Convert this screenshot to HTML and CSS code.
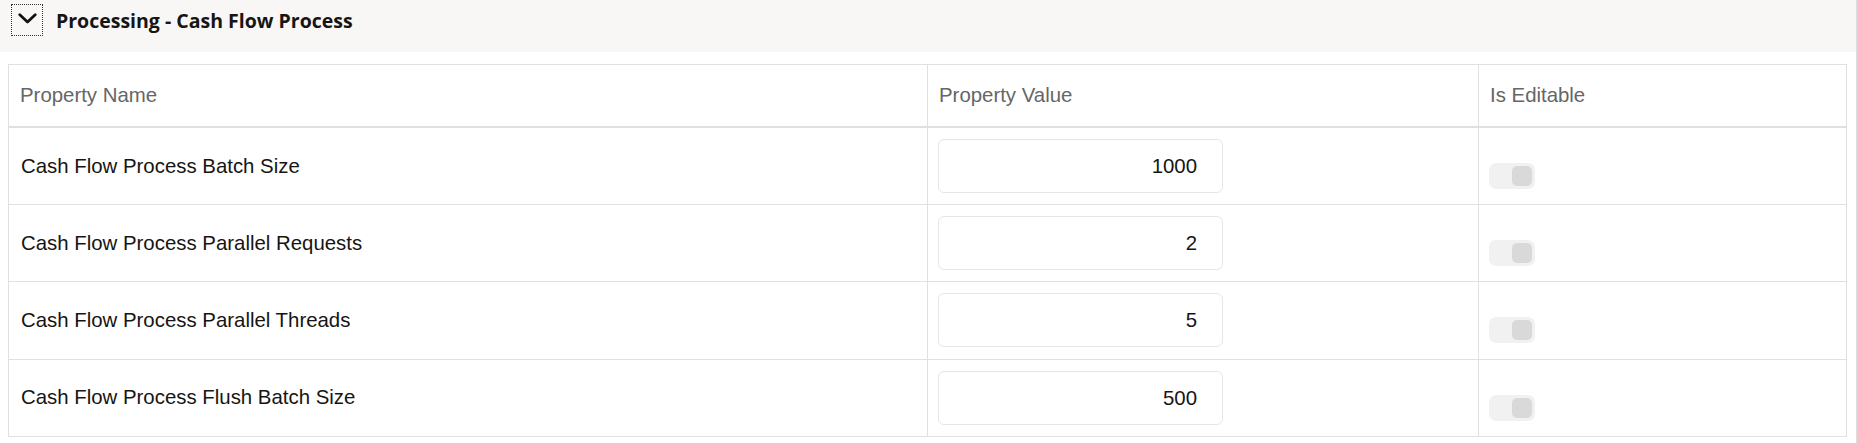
FILE: index.html
```html
<!DOCTYPE html>
<html lang="en">
<head>
<meta charset="utf-8">
<title>Processing - Cash Flow Process</title>
<link rel="stylesheet" href="styles.css">
</head>
<body>
<div class="panel">
  <div class="panel-header">
    <button class="collapse-btn" aria-label="Collapse">
      <svg width="19" height="11" viewBox="0 0 19 11"><path d="M1.8 1.8 L9.5 9 L17.2 1.8" fill="none" stroke="#111" stroke-width="2.8" stroke-linecap="round" stroke-linejoin="round"/></svg>
    </button>
    <h2 class="panel-title">Processing - Cash Flow Process</h2>
  </div>
  <div class="table-wrap">
    <table class="props">
      <colgroup>
        <col class="c-name">
        <col class="c-value">
        <col class="c-edit">
      </colgroup>
      <thead>
        <tr><th>Property Name</th><th>Property Value</th><th>Is Editable</th></tr>
      </thead>
      <tbody>
        <tr>
          <td class="name">Cash Flow Process Batch Size</td>
          <td class="value"><div class="input">1000</div></td>
          <td class="edit"><span class="toggle"><span class="knob"></span></span></td>
        </tr>
        <tr>
          <td class="name">Cash Flow Process Parallel Requests</td>
          <td class="value"><div class="input">2</div></td>
          <td class="edit"><span class="toggle"><span class="knob"></span></span></td>
        </tr>
        <tr>
          <td class="name">Cash Flow Process Parallel Threads</td>
          <td class="value"><div class="input">5</div></td>
          <td class="edit"><span class="toggle"><span class="knob"></span></span></td>
        </tr>
        <tr>
          <td class="name">Cash Flow Process Flush Batch Size</td>
          <td class="value"><div class="input">500</div></td>
          <td class="edit"><span class="toggle"><span class="knob"></span></span></td>
        </tr>
      </tbody>
    </table>
  </div>
</div>
</body>
</html>
```
FILE: styles.css
```css
html, body {
  margin: 0;
  padding: 0;
  background: #ffffff;
}
.panel {
  width: 1856px;
  height: 443px;
  border-right: 1px solid #dedede;
  overflow: hidden;
}
.panel-header {
  height: 52px;
  background: #f8f7f5;
  display: flex;
  align-items: flex-start;
}
.collapse-btn {
  margin: 4px 0 0 11px;
  width: 32px;
  height: 32px;
  padding: 0;
  border: 1px dotted #333;
  background: transparent;
  display: flex;
  align-items: center;
  justify-content: center;
}
.collapse-btn svg {
  margin-top: -3px;
}
.panel-title {
  margin: 8px 0 0 13px;
  font-family: "Open Sans", "Noto Sans", sans-serif;
  font-weight: 700;
  font-size: 19.5px;
  line-height: 26px;
  color: #161513;
}
.table-wrap {
  padding: 12px 11px 0 8px;
}
.props {
  width: 1838px;
  border-collapse: collapse;
  table-layout: fixed;
  font-family: "Liberation Sans", Arial, sans-serif;
  font-size: 20.4px;
}
.c-name { width: 919px; }
.c-value { width: 551px; }
.c-edit { width: 368px; }
.props th, .props td {
  border: 1px solid #e0e0e0;
  padding: 0 10px;
  text-align: left;
  vertical-align: middle;
}
.props th {
  height: 61px;
  font-weight: 400;
  color: #666666;
  padding-left: 11px;
}
.props thead tr {
  border-bottom: 2px solid #e0e0e0;
}
.props td {
  height: 76.2px;
  color: #161513;
}
.props td.name {
  padding-left: 12px;
}
.props td.value {
  padding-left: 10px;
}
.input {
  width: 285px;
  height: 54px;
  box-sizing: border-box;
  border: 1px solid #e6e6e6;
  border-radius: 6px;
  text-align: right;
  padding-right: 25px;
  line-height: 52px;
  color: #161513;
}
.props td.edit {
  padding-left: 10px;
}
.toggle {
  display: flex;
  justify-content: flex-end;
  align-items: center;
  width: 46px;
  height: 26px;
  box-sizing: border-box;
  padding: 3px;
  margin-top: 20px;
  border-radius: 7px;
  background: #f1f1f1;
}
.knob {
  display: block;
  width: 20px;
  height: 20px;
  border-radius: 5px;
  background: #d9d9d9;
}
```
